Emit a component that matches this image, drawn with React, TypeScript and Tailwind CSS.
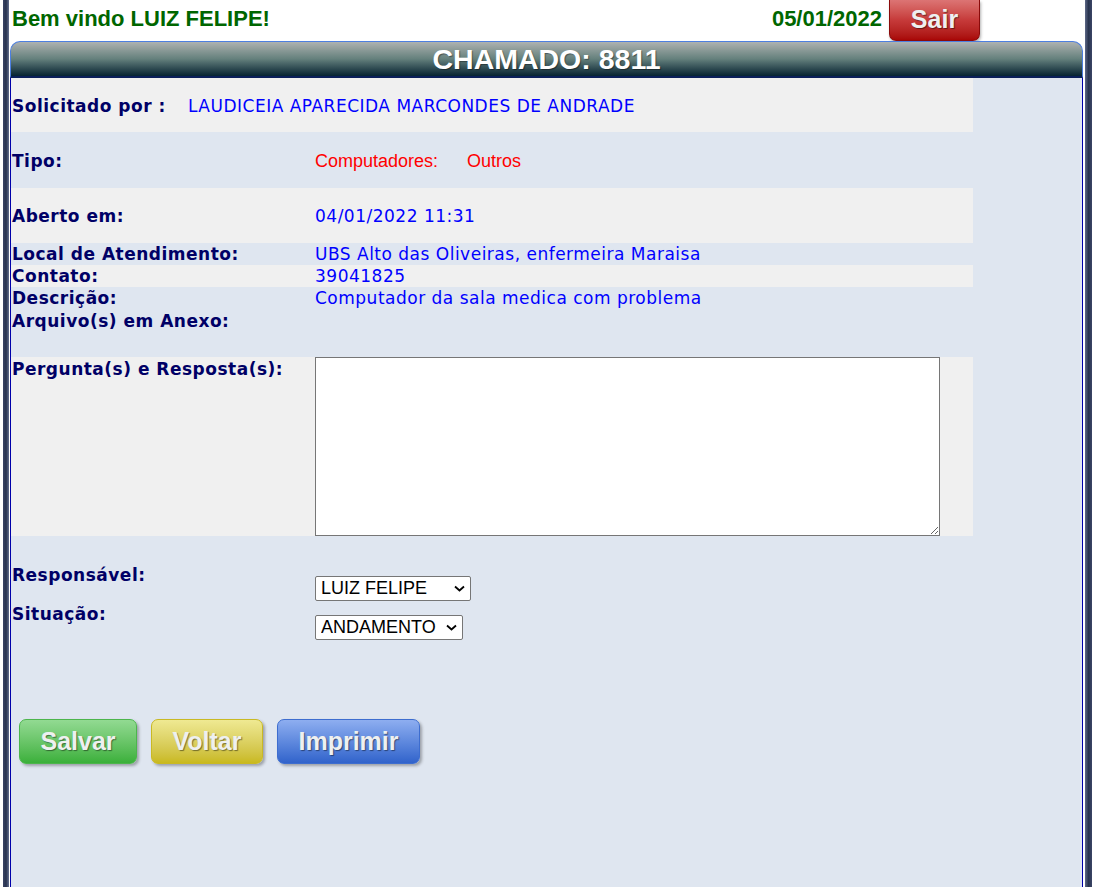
import React from "react";

const label =
  "font-['DejaVu_Sans',sans-serif] font-bold text-[17px] tracking-[0.5px] text-[#000066]";
const value = "font-['DejaVu_Sans',sans-serif] text-[17px] tracking-[0.5px] text-[#0000ff]";
const btnText =
  "font-['Liberation_Sans',Arial,sans-serif] font-bold text-[25px] text-[#eef0f0] [text-shadow:1px_1px_1px_rgba(0,0,0,0.45)]";

function Btn({ children, cls }: { children: React.ReactNode; cls: string }) {
  return (
    <button
      className={`h-[45px] rounded-[7px] border shadow-[2px_2px_3px_rgba(0,0,0,0.3)] ${btnText} ${cls}`}
    >
      {children}
    </button>
  );
}

function Select({ text, width }: { text: string; width: string }) {
  return (
    <div className={`relative mt-[13px] h-[25px] ${width}`}>
      <select className="h-[25px] w-full appearance-none rounded-[2px] border border-[#767676] bg-white pl-[5px] font-['Liberation_Sans',Arial,sans-serif] text-[18px] leading-[23px] text-black">
        <option>{text}</option>
      </select>
      <svg
        className="pointer-events-none absolute right-[6px] top-[9px]"
        width="11"
        height="7"
        viewBox="0 0 11 7"
      >
        <path d="M1 1.5 L5.5 5.5 L10 1.5" fill="none" stroke="#000" strokeWidth="1.8" />
      </svg>
    </div>
  );
}

export default function App() {
  return (
    <div className="flex min-h-[887px] h-screen bg-white">
      <div className="w-[3px]" />
      <div className="w-[6px] bg-linear-to-r from-[#3b4566] via-[#28334f] to-[#65708e]" />
      <div className="w-[1px]" />

      {/* main column */}
      <div className="flex w-[1073px] flex-col">
        {/* top bar */}
        <div className="flex h-[41px] items-start">
          <div className="flex h-[37px] flex-1 items-center pl-[2px] font-['Liberation_Sans',Arial,sans-serif] text-[22px] font-bold text-[#006600]">
            Bem vindo LUIZ FELIPE!
          </div>
          <div className="flex h-[37px] items-center pr-[7px] font-['Liberation_Sans',Arial,sans-serif] text-[22px] font-bold text-[#006600]">
            05/01/2022
          </div>
          <button
            className={`h-[41px] w-[91px] rounded-b-[7px] border-x border-b border-[#8a0a0a] bg-linear-to-b from-[#dc7474] via-[#c63a3a] to-[#a80606] shadow-[1px_2px_3px_rgba(0,0,0,0.3)] ${btnText}`}
          >
            Sair
          </button>
          <div className="w-[103px]" />
        </div>

        {/* panel */}
        <div className="flex flex-1 flex-col">
          <div className="flex h-[37px] items-center justify-center rounded-t-[10px] border-x border-t border-[#4d7fe0] border-b-[2px] border-b-[#0a1f5a] bg-linear-to-b from-[#aeb2b1] via-[#64807c] to-[#062432] font-['Liberation_Sans',Arial,sans-serif] text-[28.5px] font-bold text-white [text-shadow:1px_1px_1px_rgba(0,0,0,0.4)]">
            CHAMADO: 8811
          </div>

          <div className="flex flex-1 flex-col border-x border-[#0000aa] bg-[#dfe6f0]">
            <div className="w-[962px]">
              <div className="flex h-[54px] items-center bg-[#f0f0f0] pl-[1px] pt-[3px]">
                <div className={`w-[176px] ${label}`}>Solicitado por :</div>
                <div className={value}>LAUDICEIA APARECIDA MARCONDES DE ANDRADE</div>
              </div>

              <div className="flex h-[56px] items-center pl-[1px] pt-[3px]">
                <div className={`w-[303px] ${label}`}>Tipo:</div>
                <div className="flex font-['Liberation_Sans',Arial,sans-serif] text-[18px] text-[#ff0000]">
                  <span className="w-[152px]">Computadores:</span>
                  <span>Outros</span>
                </div>
              </div>

              <div className="flex h-[55px] items-center bg-[#f0f0f0] pl-[1px] pt-[2px]">
                <div className={`w-[303px] ${label}`}>Aberto em:</div>
                <div className={value}>04/01/2022 11:31</div>
              </div>

              <div className="flex h-[22px] items-center pl-[1px] pt-[2px]">
                <div className={`w-[303px] ${label}`}>Local de Atendimento:</div>
                <div className={value}>UBS Alto das Oliveiras, enfermeira Maraisa</div>
              </div>

              <div className="flex h-[22px] items-center bg-[#f0f0f0] pl-[1px] pt-[2px]">
                <div className={`w-[303px] ${label}`}>Contato:</div>
                <div className={value}>39041825</div>
              </div>

              <div className="flex h-[23px] items-center pl-[1px] pt-[1px]">
                <div className={`w-[303px] ${label}`}>Descrição:</div>
                <div className={value}>Computador da sala medica com problema</div>
              </div>

              <div className="flex h-[23px] items-center pl-[1px] pt-[1px]">
                <div className={`w-[303px] ${label}`}>Arquivo(s) em Anexo:</div>
              </div>

              <div className="mt-[24px] flex h-[179px] bg-[#f0f0f0] pl-[1px]">
                <div className={`w-[303px] pt-[1px] leading-[22px] ${label}`}>Pergunta(s) e Resposta(s):</div>
                <textarea className="h-[179px] w-[625px] resize border border-[#767676] bg-white" />
              </div>
            </div>

            <div className="mt-[27px] pl-[1px]">
              <div className="flex h-[39px]">
                <div className={`w-[303px] pt-[1px] leading-[22px] ${label}`}>Responsável:</div>
                <Select text="LUIZ FELIPE" width="w-[156px]" />
              </div>
              <div className="flex h-[39px]">
                <div className={`w-[303px] pt-[1px] leading-[22px] ${label}`}>Situação:</div>
                <Select text="ANDAMENTO" width="w-[148px]" />
              </div>
            </div>

            <div className="mt-[78px] flex gap-[14px] pl-[8px]">
              <Btn cls="w-[118px] border-[#4cb54c] bg-linear-to-b from-[#92da92] to-[#3ab03a]">Salvar</Btn>
              <Btn cls="w-[112px] border-[#c9b924] bg-linear-to-b from-[#efe992] to-[#c9b91c]">Voltar</Btn>
              <Btn cls="w-[143px] border-[#3d6dcf] bg-linear-to-b from-[#8eaef0] to-[#3163cb]">Imprimir</Btn>
            </div>
          </div>
        </div>
      </div>

      <div className="w-[2px]" />
      <div className="w-[7px] bg-linear-to-r from-[#5d6887] via-[#29344f] to-[#3b4566]" />
      <div className="flex-1" />
    </div>
  );
}
